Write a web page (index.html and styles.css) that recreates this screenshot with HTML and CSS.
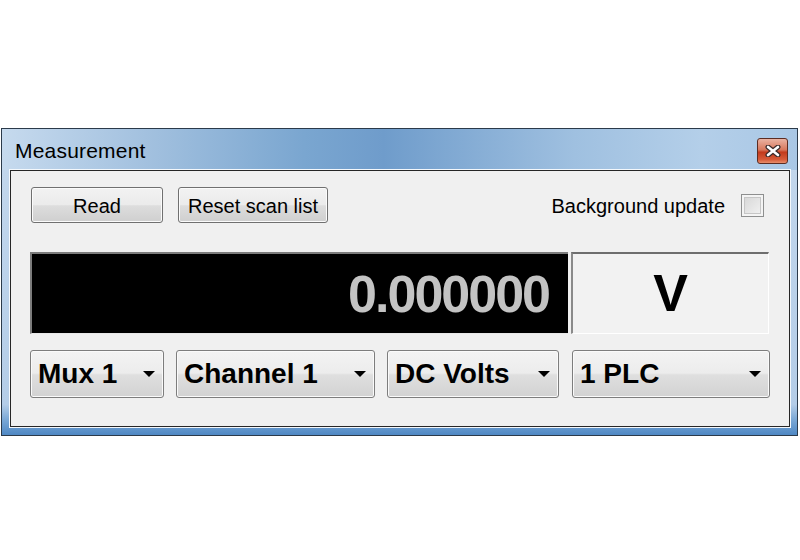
FILE: index.html
```html
<!DOCTYPE html>
<html>
<head>
<meta charset="utf-8">
<title>Measurement</title>
<link rel="stylesheet" href="styles.css">
</head>
<body>

<div class="window">
  <div class="titlebar">
    <span class="title">Measurement</span>
    <span class="close">
      <svg width="16" height="12" viewBox="0 0 16 12">
        <path d="M3 2 L13 10 M13 2 L3 10" stroke="#3a2a2a" stroke-width="5" stroke-linecap="round"/>
        <path d="M3 2 L13 10 M13 2 L3 10" stroke="#ffffff" stroke-width="2.6" stroke-linecap="round"/>
      </svg>
    </span>
  </div>

  <div class="client">
    <div class="toolbar">
      <span class="btn btn_read">Read</span>
      <span class="btn btn_reset">Reset scan list</span>
      <span class="spacer"></span>
      <span class="bglabel">Background update</span>
      <span class="check"></span>
    </div>

    <div class="readout">
      <div class="value">0.000000</div>
      <div class="unit">V</div>
    </div>

    <div class="selects">
      <div class="combo combo_mux"><span>Mux 1</span><i class="arrow"></i></div>
      <div class="combo combo_chan"><span>Channel 1</span><i class="arrow"></i></div>
      <div class="combo combo_func"><span>DC Volts</span><i class="arrow"></i></div>
      <div class="combo combo_plc"><span>1 PLC</span><i class="arrow"></i></div>
    </div>
  </div>
</div>

</body>
</html>
```

FILE: styles.css
```css
body {
	margin: 0px;
	padding: 0px;
	background: #ffffff;
	font-family: "Liberation Sans", Arial, sans-serif;
}

/* outer window frame */
.window {
	margin: 128px 0 0 1px;
	width: 795px;
	height: 306px;
	border: 1px solid #2b3a4a;
	display: flex;
	flex-direction: column;
	background: linear-gradient(to bottom, #c4d8ed 0%, #b4cde8 90%, #7aa8d6 95%, #4f88c4 100%);
}

.titlebar {
	height: 41px;
	display: flex;
	align-items: center;
	padding: 0 9px 0 13px;
	background: linear-gradient(to right, #c6daee 0%, #a3c1df 18%, #7aa6d0 38%, #6f9ccb 48%, #9fc0e0 72%, #b4cfe9 88%, #a9c7e5 100%);
}

.title {
	flex: 1;
	font-size: 21px;
	letter-spacing: 0.2px;
	color: #000000;
	padding-top: 3px;
}

.close {
	width: 29px;
	height: 24px;
	margin-top: 2px;
	border: 1px solid #5b2c22;
	border-radius: 3px;
	display: flex;
	align-items: center;
	justify-content: center;
	background: linear-gradient(to bottom, #eab3a2 0%, #d8775c 45%, #c23a1c 55%, #d65a38 85%, #e88e6c 100%);
}

/* client area */
.client {
	box-sizing: border-box;
	margin: 0 7px 0 8px;
	height: 257px;
	border: 1px solid #262626;
	box-shadow: 0 0 0 1px #f4f8fc;
	background: #f0f0f0;
	padding: 16px 18px 0 19px;
	display: flex;
	flex-direction: column;
}

.toolbar {
	display: flex;
	align-items: center;
	height: 36px;
	padding-left: 1px;
}

.btn {
	box-sizing: border-box;
	height: 36px;
	border: 1px solid #707070;
	border-radius: 3px;
	box-shadow: inset 0 0 0 1px #fbfbfb;
	background: linear-gradient(to bottom, #f2f2f2 0%, #ebebeb 50%, #dddddd 52%, #cfcfcf 100%);
	font-size: 20px;
	display: flex;
	align-items: center;
	justify-content: center;
	color: #000000;
	padding-top: 2px;
}

.btn_read {
	width: 132px;
}

.btn_reset {
	width: 150px;
	margin-left: 15px;
}

.spacer {
	flex: 1;
}

.bglabel {
	font-size: 20px;
	margin-right: 16px;
	padding-top: 3px;
}

.check {
	box-sizing: border-box;
	width: 23px;
	height: 23px;
	margin-right: 7px;
	border: 1px solid #8e8f8f;
	box-shadow: inset 0 0 0 2px #f4f4f4, inset 0 0 0 3px #c6c6c6;
	background: linear-gradient(135deg, #d4d4d4 0%, #f4f4f4 100%);
}

/* numeric display */
.readout {
	display: flex;
	margin-top: 29px;
	height: 82px;
	gap: 3px;
}

.value {
	box-sizing: border-box;
	width: 538px;
	background: #000000;
	border-top: 2px solid #7c7c7c;
	border-left: 2px solid #7c7c7c;
	border-bottom: 1px solid #e8e8e8;
	color: #c3c3c3;
	font-weight: bold;
	font-size: 52px;
	letter-spacing: -2px;
	text-align: right;
	padding-right: 19px;
	line-height: 80px;
}

.unit {
	box-sizing: border-box;
	width: 198px;
	border-top: 2px solid #6e6e6e;
	border-left: 2px solid #8a8a8a;
	border-right: 1px solid #ffffff;
	border-bottom: 1px solid #ffffff;
	background: #f2f2f2;
	font-weight: bold;
	font-size: 52px;
	text-align: center;
	line-height: 78px;
	color: #000000;
}

/* drop-down boxes */
.selects {
	display: flex;
	margin-top: 16px;
	gap: 12px;
}

.combo {
	box-sizing: border-box;
	height: 48px;
	border: 1px solid #7d7d7d;
	border-radius: 3px;
	box-shadow: inset 0 0 0 1px #fafafa;
	background: linear-gradient(to bottom, #f3f3f3 0%, #ececec 48%, #dfdfdf 52%, #d2d2d2 100%);
	display: flex;
	align-items: center;
	padding: 0 8px 0 7px;
	font-weight: bold;
	font-size: 28px;
	color: #000000;
}

.combo span {
	flex: 1;
}

.arrow {
	width: 0;
	height: 0;
	border-left: 6px solid transparent;
	border-right: 6px solid transparent;
	border-top: 6px solid #000000;
}

.combo_mux {
	width: 134px;
}

.combo_chan {
	width: 199px;
}

.combo_func {
	width: 172px;
}

.combo_plc {
	width: 198px;
	margin-left: 1px;
}
```
